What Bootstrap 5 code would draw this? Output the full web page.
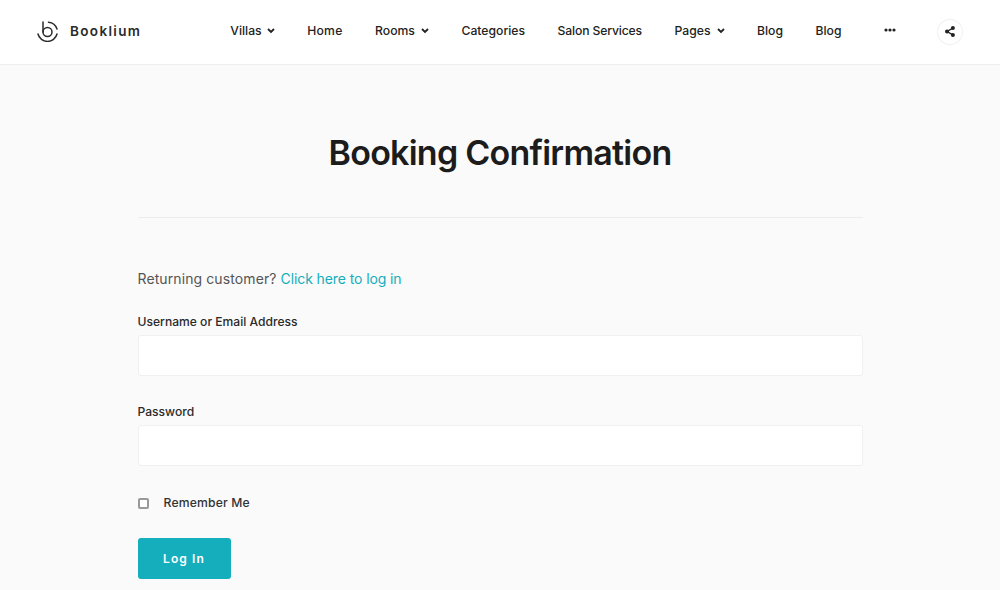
<!doctype html>
<html lang="en"><head><meta charset="utf-8"><title>Booking Confirmation</title>
<link href="https://cdn.jsdelivr.net/npm/bootstrap@5.3.0/dist/css/bootstrap.min.css" rel="stylesheet">
<style>
html,body{height:590px;overflow:hidden}
body{font-family:Inter,"Liberation Sans",sans-serif;background:#fafafa;color:#222}
.topbar{height:65px;background:#fff;border-bottom:1px solid #eee;padding:0 37px 1px 37px}
.brand-logo{width:21px;height:21px;margin-right:12px}
.brand-name{font-size:13.5px;font-weight:600;letter-spacing:1.35px;color:#2a2a2a;text-decoration:none}
.menu-wrap{margin-left:89px;gap:32.5px;font-size:12.2px;font-weight:500;white-space:nowrap}
.menu-wrap a{color:#222;text-decoration:none;display:flex;align-items:center;gap:6px}
.menu-wrap .item-villas{gap:5px}
.menu-wrap .item-home{letter-spacing:.25px}
.menu-wrap .item-salon{letter-spacing:-.15px}
.share-btn{width:26px;height:26px;border:1px solid #f0f0f0;border-radius:50%;margin-left:41px}
.more-dots{margin-left:10px;margin-top:-3px}
.page-body{width:725px;margin:0 auto}
.page-title{font-size:34px;font-weight:600;letter-spacing:-.75px;color:#1c1c1c;margin:0;padding-top:68px;height:153px;border-bottom:1px solid #ececec;text-align:center;line-height:40px}
.return-note{font-size:14px;color:#555;margin:51px 0 0;line-height:20px;letter-spacing:.1px}
.return-note a{color:#14aebc;text-decoration:none;letter-spacing:-.1px}
.field-label{font-size:12.1px;font-weight:500;color:#2a2a2a;display:block;line-height:16px;margin-bottom:5px}
.field-input{height:41px;border:1px solid #f0f0f0;border-radius:3px;background:#fff}
.field-one{margin-top:25px}
.field-two{margin-top:28px}
.remember-row{margin-top:29px;font-size:12.2px;font-weight:500;color:#333;line-height:16px;letter-spacing:.15px}
.check-box{width:11px;height:11px;border:2px solid #999;border-radius:2px;background:#fff;appearance:none;margin-right:15px}
.login-btn{width:93px;height:41px;margin-top:27px;background:#14aebc;border:0;border-radius:3px;color:#fff;font-size:12px;font-weight:600;letter-spacing:1.1px}
</style></head><body>
<header class="topbar d-flex align-items-center">
<a href="#" class="d-flex align-items-center text-decoration-none">
<svg class="brand-logo" viewBox="0 0 21 21" fill="none" stroke="#2a2a2a" stroke-width="1.5" stroke-linecap="round"><path d="M1 13a9.8 9.8 0 0 0 19 0"/><path d="M6 1v10"/><circle cx="10.5" cy="11" r="4.5"/><path d="M11.5 1.2a9.8 9.8 0 0 1 8.5 6.8"/></svg>
<span class="brand-name">Booklium</span></a>
<nav class="menu-wrap d-flex align-items-center">
<a href="#" class="item-villas">Villas <svg width="8" height="6" viewBox="0 0 8 6" fill="none" stroke="#222" stroke-width="1.8"><path d="M1 1l3 3 3-3"/></svg></a>
<a href="#" class="item-home">Home</a>
<a href="#">Rooms <svg width="8" height="6" viewBox="0 0 8 6" fill="none" stroke="#222" stroke-width="1.8"><path d="M1 1l3 3 3-3"/></svg></a>
<a href="#">Categories</a>
<a href="#" class="item-salon">Salon Services</a>
<a href="#">Pages <svg width="8" height="6" viewBox="0 0 8 6" fill="none" stroke="#222" stroke-width="1.8"><path d="M1 1l3 3 3-3"/></svg></a>
<a href="#">Blog</a>
<a href="#">Blog</a>
<svg class="more-dots" width="12" height="4" viewBox="0 0 12 4" fill="#222"><circle cx="2" cy="2" r="1.6"/><circle cx="6" cy="2" r="1.6"/><circle cx="10" cy="2" r="1.6"/></svg>
</nav>
<div class="share-btn d-flex align-items-center justify-content-center">
<svg width="10" height="11" viewBox="0 0 10 11" fill="#222" stroke="none"><circle cx="7.9" cy="2.1" r="2"/><circle cx="2" cy="5.5" r="2"/><circle cx="7.9" cy="8.9" r="2"/><path d="M7.9 2.1L2 5.5l5.9 3.4" fill="none" stroke="#222" stroke-width="1.3"/></svg>
</div>
</header>
<main class="page-body">
<h1 class="page-title">Booking Confirmation</h1>
<p class="return-note">Returning customer? <a href="#">Click here to log in</a></p>
<form>
<div class="field-one"><label class="field-label" for="u">Username or Email Address</label><input id="u" class="form-control field-input" type="text"></div>
<div class="field-two"><label class="field-label" for="p">Password</label><input id="p" class="form-control field-input" type="password"></div>
<label class="remember-row d-flex align-items-center"><input type="checkbox" class="check-box">Remember Me</label>
<button type="button" class="btn login-btn">Log In</button>
</form>
</main>
</body></html>
